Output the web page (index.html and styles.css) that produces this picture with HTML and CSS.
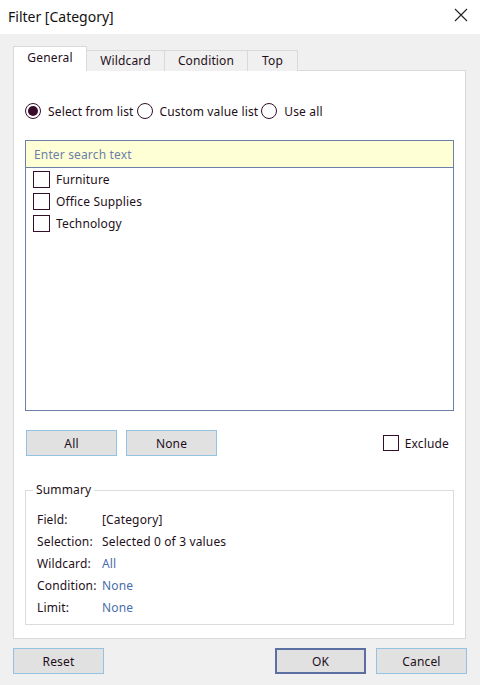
FILE: index.html
```html
<!DOCTYPE html>
<html>
<head>
<meta charset="utf-8">
<link rel="stylesheet" href="styles.css">
</head>
<body>
<div class="dialog">
  <div class="titlebar">
    <span class="title">Filter [Category]</span>
    <svg class="close" width="14" height="14" viewBox="0 0 14 14"><path d="M1 1 L13 13 M13 1 L1 13" stroke="#222" stroke-width="1.1" fill="none"/></svg>
  </div>
  <div class="main">
    <div class="tabs">
      <div class="tab active">General</div>
      <div class="tab t-wild">Wildcard</div>
      <div class="tab t-cond">Condition</div>
      <div class="tab t-top">Top</div>
    </div>
    <div class="panel">
      <div class="radios">
        <label class="radio"><span class="circle on"></span>Select from list</label>
        <label class="radio"><span class="circle"></span>Custom value list</label>
        <label class="radio"><span class="circle"></span>Use all</label>
      </div>
      <div class="listbox">
        <div class="search">Enter search text</div>
        <div class="items">
          <div class="item"><span class="check"></span>Furniture</div>
          <div class="item"><span class="check"></span>Office Supplies</div>
          <div class="item"><span class="check"></span>Technology</div>
        </div>
      </div>
      <div class="actions">
        <div class="btn">All</div>
        <div class="btn">None</div>
        <div class="spacer"></div>
        <div class="exclude"><span class="check"></span>Exclude</div>
      </div>
      <div class="summary">
        <div class="legend">Summary</div>
        <div class="srow"><span class="lbl">Field:</span><span class="val">[Category]</span></div>
        <div class="srow"><span class="lbl">Selection:</span><span class="val">Selected 0 of 3 values</span></div>
        <div class="srow"><span class="lbl">Wildcard:</span><span class="val blue">All</span></div>
        <div class="srow"><span class="lbl">Condition:</span><span class="val blue">None</span></div>
        <div class="srow"><span class="lbl">Limit:</span><span class="val blue">None</span></div>
      </div>
    </div>
    <div class="footer">
      <div class="btn">Reset</div>
      <div class="spacer"></div>
      <div class="btn ok">OK</div>
      <div class="btn">Cancel</div>
    </div>
  </div>
</div>
</body>
</html>
```
FILE: styles.css
```css
* { box-sizing: border-box; }
html, body { margin: 0; padding: 0; }
body {
  width: 480px;
  height: 685px;
  font-family: "Noto Sans", "Open Sans", sans-serif;
  font-size: 12px;
  letter-spacing: 0.15px;
  color: #1e0f1a;
  background: #f0f0f0;
  overflow: hidden;
}
.dialog { width: 480px; height: 685px; display: flex; flex-direction: column; }
.titlebar {
  height: 34px;
  background: #ffffff;
  display: flex;
  align-items: center;
  padding: 0 12px 0 8px;
}
.title { font-size: 14px; letter-spacing: 0; color: #111; flex: 1; margin-top: -2px; }
.close { margin-top: -4px; }
.main {
  flex: 1;
  background: #f0f0f0;
  padding: 13px 13px 0 13px;
  display: flex;
  flex-direction: column;
}
.tabs {
  display: flex;
  align-items: flex-end;
  height: 24px;
  margin-bottom: -1px;
  position: relative;
  z-index: 1;
}
.tab {
  height: 21px;
  border: 1px solid #d9d9d9;
  border-bottom: none;
  border-left: none;
  background: #f0f0f0;
  display: flex;
  align-items: center;
  justify-content: center;
  padding-bottom: 1px;
}
.tab.active {
  height: 25px;
  width: 74px;
  background: #ffffff;
  border-left: 1px solid #d9d9d9;
  padding-bottom: 4px;
}
.t-wild { width: 78px; }
.t-cond { width: 83px; }
.t-top { width: 50px; }
.panel {
  width: 453px;
  height: 569px;
  background: #ffffff;
  border: 1px solid #d9d9d9;
  padding: 0 12px 0 11px;
  display: flex;
  flex-direction: column;
}
.radios {
  display: flex;
  align-items: center;
  height: 16px;
  margin-top: 32px;
}
.radio { display: flex; align-items: center; margin-right: 3px; }
.circle {
  width: 16px;
  height: 16px;
  border: 1px solid #33102a;
  border-radius: 50%;
  margin-right: 7px;
  display: flex;
  align-items: center;
  justify-content: center;
}
.circle.on::after {
  content: "";
  width: 10px;
  height: 10px;
  border-radius: 50%;
  background: #3a0c2c;
}
.listbox {
  margin-top: 21px;
  width: 429px;
  height: 271px;
  border: 1px solid #6b7fa8;
  display: flex;
  flex-direction: column;
}
.search {
  height: 27px;
  background: #ffffd6;
  border-bottom: 1px solid #6b7fa8;
  color: #6b7fa8;
  display: flex;
  align-items: center;
  padding-left: 8px;
}
.items { padding-top: 0; }
.item {
  height: 22px;
  display: flex;
  align-items: center;
  padding-left: 7px;
}
.check {
  width: 17px;
  height: 17px;
  border: 1px solid #33102a;
  margin-right: 6px;
  background: #fff;
}
.actions {
  display: flex;
  align-items: center;
  margin-top: 19px;
  height: 26px;
  padding-left: 1px;
}
.btn {
  width: 91px;
  height: 26px;
  background: #e1e1e1;
  border: 1px solid #93c2e3;
  display: flex;
  align-items: center;
  justify-content: center;
  margin-right: 9px;
}
.spacer { flex: 1; }
.exclude { display: flex; align-items: center; margin-right: 4px; }
.exclude .check { width: 16px; height: 16px; margin-right: 6px; }
.summary {
  margin-top: 34px;
  width: 429px;
  height: 135px;
  border: 1px solid #dcdcdc;
  position: relative;
  padding: 17px 0 0 11px;
}
.legend {
  position: absolute;
  top: -9px;
  left: 7px;
  background: #fff;
  padding: 0 3px;
  line-height: 16px;
}
.srow { height: 22px; display: flex; align-items: center; }
.lbl { width: 65px; }
.blue { color: #4a6ea9; }
.footer {
  display: flex;
  align-items: center;
  margin-top: 9px;
  height: 26px;
}
.footer .btn { margin-right: 0; width: 91px; }
.footer .btn.ok { border: 2px solid #5b6fa3; margin-right: 10px; }
```
